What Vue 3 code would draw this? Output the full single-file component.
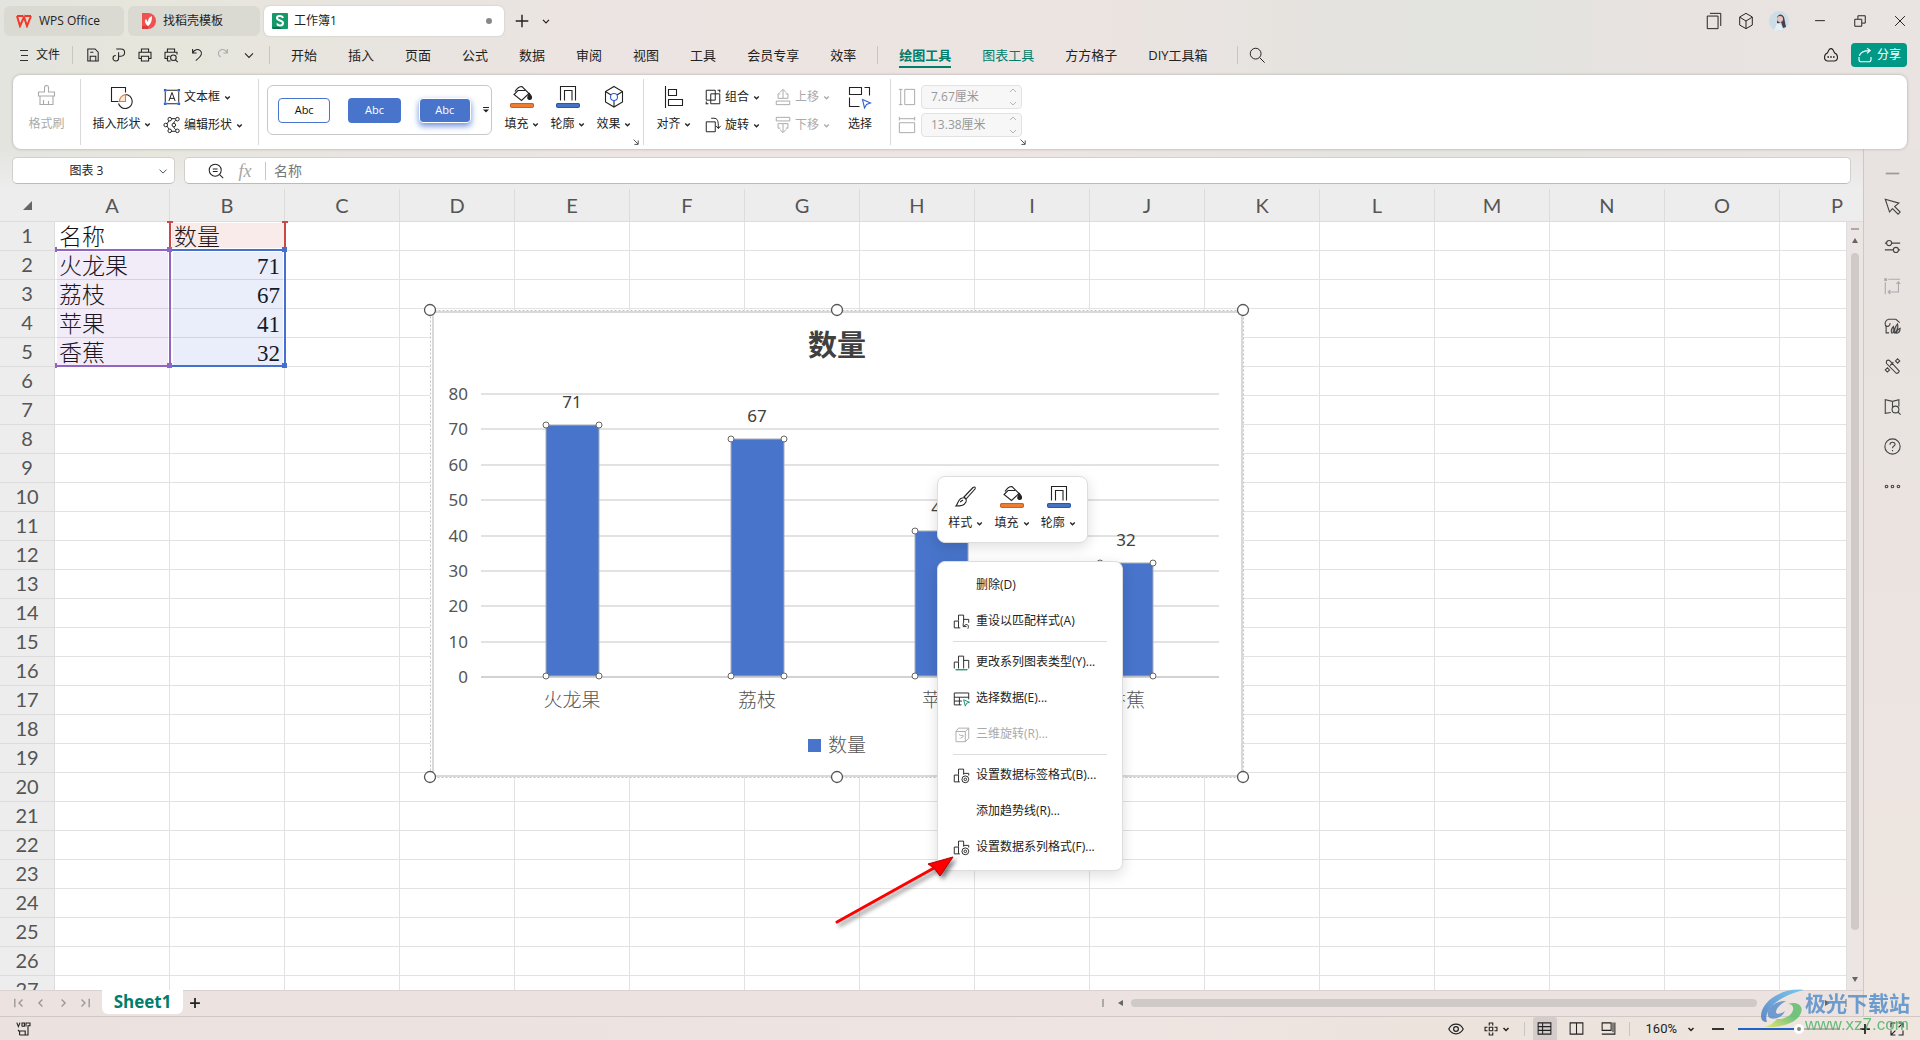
<script setup>
import { h, ref } from 'vue'

const icons = {
  save: '<path d="M3.5 2.5h9l4 4v11h-13zM6.5 17.5v-6h7v6M6.5 6.500h4"/>',
  output: '<path d="M6.500 2.500h6a4.500 4.500 0 0 1 0 9H9.500M9.500 6.500v7.500a3.500 3.500 0 1 1-3.500-3.500"/>',
  print: '<path d="M5.500 6.500v-4h9v4M5.500 14.500h-3v-8h15v8h-3M5.500 11.500h9v6h-9z"/>',
  preview: '<path d="M5.500 6.500v-4h9v4M6.500 14.500h-4v-8h15v3M5.500 17.500v-6h3M5.500 17.500h4"/><circle cx="13" cy="13.500" r="3.500"/><path d="M15.500 16l3 3"/>',
  undo: '<path d="M4.500 2.500v5h5M4.500 7C7 3 11 2 14 4.500s2.500 6-5.500 12.500"/>',
  redo: '<path d="M15.500 2.500v5h-5M15.500 7C13 3 9 2 6 4.500s-2 5.500 1 8"/>',
  down: '<path d="M5 8l5 5 5-5"/>',
  search: '<circle cx="8.500" cy="8.500" r="6"/><path d="M13 13l5.500 5.500"/>',
  brush: '<path d="M8.500 7V2.500a2 2 0 0 1 4 0V7h6v4h-16V7zM4 11v8.500h13V11M7.500 19v-4M12.500 19v-3" transform="translate(1 0)"/>',
  shapes: '<path d="M8.500 16.500h-7v-14h14v5"/><path d="M15.500 9.500a7 7 0 1 1-7 9"/><path d="M9.500 16.500c0-4 2-6 6-7v7z" stroke="#e07b3a" fill="#fde9da"/>',
  textbox: '<path d="M4 2.500h12M4 17.500h12M2.500 4v12M17.500 4v12M6.500 14.500L10 5l3.500 9.500M7.500 11.500h5"/><path d="M1 1h3v3H1zM16 1h3v3h-3zM1 16h3v3H1zM16 16h3v3h-3z" fill="#2f62d9" stroke="none"/>',
  editshape: '<path d="M8 3.500L3.500 10 8 16.500M16 3.500c-6 3-6 10 0 13M8 3h6M8 17h6"/><g fill="#fff"><circle cx="7.500" cy="3.500" r="2"/><circle cx="16" cy="3.500" r="2"/><circle cx="3" cy="10" r="2"/><circle cx="12" cy="10" r="2"/><circle cx="7.500" cy="16.500" r="2"/><circle cx="16" cy="16.500" r="2"/></g>',
  fill: '<path d="M5 6.500C6.500 4 8.500 1.500 12 1.500l7 7-7.500 7L4 9.500l4-4h7"/><path d="M19.500 8.500c3 3.500 2.500 6 0 6s-2-3 0-6z" fill="currentColor"/><rect x="0.500" y="18.500" width="23" height="4" rx="1.500" fill="#ed7d31" stroke="#c4622a"/>',
  outline: '<path d="M4.500 15.500v-14h15v14M8.500 15.500v-10h7.500v10"/><rect x="0.500" y="18.500" width="23" height="4" rx="1.500" fill="#4472c4" stroke="#30569e"/>',
  effect: '<path d="M12 1.500l8.500 5v10.500l-8.500 5-8.500-5V6.500zM3.500 6.500l5.500 3.500M20.500 6.500l-5.500 3.500M12 15.500v6"/><circle cx="12" cy="12" r="3.500" stroke="#2f62d9"/>',
  align: '<path d="M3.500 1v22M6.500 4.500h8v6h-8zM6.500 14.500h14v6h-14z"/>',
  group: '<path d="M2.500 2.500h10v11h-10zM7.500 6.500h10v11h-10zM15 2.500h3M17.500 2v3M2.500 15v3M2 17.500h3"/>',
  rotate: '<path d="M2.500 6.500h10v11h-10zM8 2.500h3c4 0 5 2.500 5 11M13.500 11l2.500 3L18.500 11"/>',
  moveup: '<path d="M2.500 14.500h15v4h-15zM10 11V2M6.500 5L10 1.500 13.500 5M7 6.500H4.500v5h11v-5H13"/>',
  movedown: '<path d="M2.500 1.500h15v4h-15zM10 9v9M6.500 15l3.500 3.500 3.500-3.500M7 13.500H4.500v-5h11v5H13"/>',
  select: '<path d="M1.500 9.500v-7h12v7zM16.500 2.500h5v8M1.500 12.500v9h10"/><path d="M14.500 14.500l8 3.500-4 1.500-2 3.500z" stroke="#2f62d9"/>',
  height: '<path d="M1 1.500h4M1 18.500h4M3 1.500v17M7.500 1.500h11v17h-11z"/>',
  width: '<path d="M1.500 1v4M18.500 1v4M1.500 3h17M1.500 7.500h17v11h-17z"/>',
  more: '<path d="M4 5h12" stroke-width="2"/><path d="M4 9h12l-6 6z" fill="currentColor" stroke="none"/>',
  launch: '<path d="M4 4l11 11M15.500 6v10H6" stroke-width="2.500"/>',
  lens: '<circle cx="9" cy="9" r="7.500"/><path d="M14.500 14.500l4.500 4.500M6 7.500h6M6 10.500h6"/>',
  window: '<path d="M2.500 4.500h12v14h-12zM5.500 1.500h12v14"/>',
  cube: '<path d="M10 1.500l7 4v9l-7 4-7-4v-9zM3.500 6L10 10l6.500-4M10 10v8"/>',
  min: '<path d="M3 9.500h14"/>',
  restore: '<path d="M2.500 7.500h10v10h-10zM7 7V2.500h10.500v10.500H13"/>',
  close: '<path d="M3 3l14 14M17 3L3 17"/>',
  cloud: '<path d="M5.500 7.500l2-4q2.500-3 5 0l2 4c4 1 5.500 9 0 10h-9c-5.500-1-4-9 0-10z"/><path d="M5.500 12.500h2M9 12.500h2M12.500 12.500h2" stroke-width="2"/>',
  share: '<path d="M2.500 12.500v3q0 3 3 3h9q3 0 3-3v-3M3 11c1-5 5-6.500 13-6.500M12.500 1.500l4 3-4 3.500"/>',
  dash: '<path d="M2 10h16" stroke="#999" stroke-width="2"/>',
  pointer: '<path d="M1.500 1.500l16 4.500-5 4 6.500 6.500-2.500 2.500L10 12.500 6.500 16.500z"/>',
  sliders: '<path d="M9 6h10M1 6h2M1 14h10M17 14h2"/><circle cx="6" cy="6" r="3"/><circle cx="14" cy="14" r="3"/>',
  resize: '<path d="M5 1.500h14M1.500 5v14M17 5v11.500H5M14.500 7L17 4.500 19 7M7.500 14L5 16.500 7.500 19"/><path d="M1 1h2v2H1z" fill="currentColor"/>',
  paint: '<path d="M6 17.500H2.500v-7C0 6 2 2 5.500 1.500H14l4.500 4M2.500 9c1.500 2 5 0 4.500-3"/><path d="M9 18c-1-3 0-6 2-8 1 3 1 6-1 8M12 18c0-5 1-8 4-11 1 5-1 9-4 11M14 18c1-3 2-5 5-6 0 4-2 6-5 6z" fill="#bbb"/>',
  wand: '<path d="M3 3.500q2-2 4 0L18 15.500q-1 3-3.500 2.500L3 6.500q-.5-1.500 0-3zM7 9l4-4"/><path d="M16 1l2.500 2.500L16 6l-2.500-2.500zM4 11.500l2.500 2.500L4 16.500 1.500 14z"/>',
  book: '<path d="M10 4v7M8 17l-6.500 1V2L10 4l7.500-2v8"/><circle cx="13.500" cy="13.500" r="4"/><path d="M16.500 16.500l3 3"/>',
  help: '<circle cx="10" cy="10" r="9"/><path d="M7 8c0-4 6-4 6-.5 0 2-3 2-3 4.500M10 14v1.500"/>',
  dots: '<circle cx="3" cy="10" r="1.500"/><circle cx="10" cy="10" r="1.500"/><circle cx="17" cy="10" r="1.500"/>',
  style: '<path d="M10 12l9-9.500q3-1.500 2 1.500L12 14zM8 13c3-1 5 1 4 4-2 4-6 4-10 4 2-2 2-7 6-8zM6 17l3-2"/>',
  mReset: '<path d="M1.500 9.500h5v8h-5zM6.500 9V2.500h6V12M12.500 7.500h6v4M8.500 17.500h-2M12 12v4h4M12.500 15.500c4-4 7-1 5 3"/>',
  mType: '<path d="M1.500 17V9.500h5V17M6.500 9V2.500h6V17M12.500 7.500h6V17"/><path d="M3 18.500h14" stroke="#0c8f70" stroke-width="1.500"/>',
  mData: '<path d="M10 17.500H1.500v-14h17V11M1.500 8.500h17M7.500 8.500v9M1.500 13h9"/><path d="M12.500 11.500l7 3-3.500 1-1.500 3.500z" stroke="#0c8f70"/>',
  mCube: '<path d="M3.500 6.500h11v12h-11zM3.500 6.500l3-4h12v12l-4 4M14.500 6.500l4-4M7 10c3 3 5-1 5 2 0 2-3 1-4 3"/>',
  mFormat: '<path d="M8 17.500H1.500v-8h5v8M6.500 9V2.500h6V9M12.500 7.500h6V10"/><circle cx="14.500" cy="14.500" r="4"/><circle cx="14.500" cy="14.500" r="1.500"/>',
  first: '<path d="M4 4v12M15 5l-5 5 5 5" stroke-width="2"/>',
  prev: '<path d="M12 5l-5 5 5 5" stroke-width="2"/>',
  next: '<path d="M8 5l5 5-5 5" stroke-width="2"/>',
  last: '<path d="M16 4v12M5 5l5 5-5 5" stroke-width="2"/>',
  plus: '<path d="M10 3v14M3 10h14"/>',
  eye: '<path d="M1 10c4-8 14-8 18 0-4 8-14 8-18 0z"/><circle cx="10" cy="10" r="3"/>',
  cross: '<path d="M7.500 7.500h5v5h-5zM7.500 5V1.500h5V5M7.500 15v3.500h5V15M5 7.500H1.500v5H5M15 7.500h3.500v5H15"/>',
  grid: '<path d="M1.500 2.500h17v15h-17zM1.500 7.500h17M7.500 2.500v15M1.500 12.500h17"/>',
  split: '<path d="M1.500 2.500h17v15h-17zM10 2.500v15"/>',
  page: '<path d="M1.500 2.500h12v10h-12zM18.500 2v15.500H1M16 15V2"/>',
  full: '<path d="M12 2.500h5.500V8M17 3l-5 5M8 17.500H2.500V12M3 17l5-5M2.500 8V2.500H8M12 17.500h5.500V12"/>',
  vba: '<path d="M1 2l2 5 2-5M7.500 2v5M7.500 2.500h3v4h-3M12.500 7V2.500h5V6H15v11.500h-3M4.500 17.500v-4l-2-2.500M4.500 12.500h7v5h-7"/>'
}

const Icon = (props) => h('svg', {
  width: props.size || 18, height: props.size || 18,
  viewBox: props.box ? '0 0 24 24' : '0 0 20 20',
  fill: 'none', stroke: 'currentColor', 'stroke-width': props.line || 1.1,
  'aria-hidden': 'true', innerHTML: icons[props.name]
})
Icon.props = ['name', 'size', 'box', 'line']

const quick = [['save', '保存'], ['output', '输出'], ['print', '打印'], ['preview', '打印预览'], ['undo', '撤销'], ['redo', '恢复'], ['down', '更多']]
const menus = ['开始', '插入', '页面', '公式', '数据', '审阅', '视图', '工具', '会员专享', '效率']
const toolMenus = ['绘图工具', '图表工具', '方方格子', 'DIY工具箱']
const columns = 'ABCDEFGHIJKLMNOP'.split('')
const cells = [['名称', '数量'], ['火龙果', 71], ['荔枝', 67], ['苹果', 41], ['香蕉', 32]]
const side = ['dash', 'pointer', 'sliders', 'resize', 'paint', 'wand', 'book', 'help', 'dots']
const contextGroups = [
  [{ t: '删除(D)' }, { t: '重设以匹配样式(A)', i: 'mReset' }],
  [{ t: '更改系列图表类型(Y)...', i: 'mType' }, { t: '选择数据(E)...', i: 'mData' }, { t: '三维旋转(R)...', i: 'mCube', off: true }],
  [{ t: '设置数据标签格式(B)...', i: 'mFormat' }, { t: '添加趋势线(R)...' }, { t: '设置数据系列格式(F)...', i: 'mFormat' }]
]

const base = 376
const yOf = (v) => Math.round(base - v * 283 / 80)
const bars = cells.slice(1).map(([name, value], i) => ({ name, value, x: Math.round(152 + i * 184.5), y: yOf(value) }))
const ticks = [80, 70, 60, 50, 40, 30, 20, 10, 0]
const handles = [[10, 10], [417, 10], [823, 10], [10, 477], [417, 477], [823, 477]]

const nameBox = ref('图表 3')
const formula = ref('名称')
const zoom = ref(61)
</script>

<template>
  <div class="app">
    <header class="title-bar">
      <button class="doc-tab home">
        <svg width="16" height="14" viewBox="0 0 16 14"><path d="M1 2l3 10 4-9 3 9L15 2M1 2h6M9 2h6" fill="none" stroke="#f0392b" stroke-width="2" /></svg>
        WPS Office
      </button>
      <button class="doc-tab docer">
        <svg width="14" height="16" viewBox="0 0 14 16"><path d="M0 0h6a8 8 0 0 1 0 16H0z" fill="#f0504e" /><path d="M0 13h6v3H0z" fill="#d93a3a" /><path d="M6 13C2 10 3 7 4 6l2 3c0-3 1-5 4-6 0 5-1 8-4 10z" fill="#fff" /></svg>
        找稻壳模板
      </button>
      <button class="doc-tab current">
        <svg width="16" height="16" viewBox="0 0 16 16"><rect width="16" height="16" rx="1" fill="#149a6a" /><path d="M0 14h8l2 2H1z" fill="#0b7048" /><path d="M11 5C10 2 5 2.500 5 5c0 3 6 2 6 5s-5 3.500-6 .5" fill="none" stroke="#fff" stroke-width="2" /></svg>
        工作簿1
        <i class="unsaved"></i>
      </button>
      <button class="plain new-tab" aria-label="新建"><Icon name="plus" :line="1.6" /></button>
      <button class="plain" aria-label="标签列表"><Icon name="down" size="12" :line="2" /></button>
      <div class="window-tools">
        <button class="plain" aria-label="窗口"><Icon name="window" /></button>
        <button class="plain" aria-label="应用"><Icon name="cube" /></button>
        <button class="plain account" aria-label="账户">
          <svg width="20" height="20" viewBox="0 0 20 20"><circle cx="10" cy="10" r="10" fill="#cddde6" /><path d="M8 6q4-5 7 0l2 10-3 1-2-6-4 2z" fill="#4a3d50" /><circle cx="11" cy="8" r="3" fill="#e9c4bd" /><path d="M5 20l3-8 4 2 2 5z" fill="#e6f0f4" /></svg>
        </button>
        <button class="plain sys" aria-label="最小化"><Icon name="min" size="14" :line="1.4" /></button>
        <button class="plain sys" aria-label="还原"><Icon name="restore" size="14" :line="1.4" /></button>
        <button class="plain sys" aria-label="关闭"><Icon name="close" size="14" :line="1.4" /></button>
      </div>
    </header>

    <nav class="menu-bar">
      <button class="plain file"><svg width="10" height="12" viewBox="0 0 10 12"><path d="M1 1.500h8M2 6.500h7M1 11.500h8" stroke="#333" /></svg>文件</button>
      <i class="rule"></i>
      <div class="quick">
        <button v-for="[n, label] in quick" :key="n" class="plain" :class="{ dim: n === 'redo' }" :aria-label="label"><Icon :name="n" size="16" :line="1.3" /></button>
      </div>
      <i class="rule"></i>
      <div class="menus">
        <button v-for="m in menus" :key="m" class="plain">{{ m }}</button>
      </div>
      <i class="rule"></i>
      <div class="menus tools">
        <button v-for="(m, i) in toolMenus" :key="m" class="plain" :class="{ green: i < 2, active: i === 0 }">{{ m }}</button>
      </div>
      <i class="rule"></i>
      <button class="plain find" aria-label="搜索"><Icon name="search" /></button>
      <button class="plain cloud" aria-label="云同步"><Icon name="cloud" size="16" :line="1.4" /></button>
      <button class="share"><Icon name="share" size="16" :line="1.4" />分享</button>
    </nav>

    <section class="ribbon">
      <button class="big w67 dim" disabled><Icon name="brush" size="24" box="1" /><span>格式刷</span></button>
      <i class="divider"></i>
      <button class="big w82"><Icon name="shapes" size="24" box="1" /><span>插入形状<Icon name="down" size="9" :line="3" /></span></button>
      <div class="pair w95">
        <button class="row"><Icon name="textbox" /><span>文本框</span><Icon name="down" size="9" :line="3" /></button>
        <button class="row"><Icon name="editshape" /><span>编辑形状</span><Icon name="down" size="9" :line="3" /></button>
      </div>
      <i class="divider"></i>
      <div class="gallery">
        <button class="swatch hollow">Abc</button>
        <button class="swatch">Abc</button>
        <button class="swatch raised">Abc</button>
        <button class="plain expand" aria-label="更多样式"><Icon name="more" size="10" /></button>
      </div>
      <div class="cluster">
        <button class="big w46"><Icon name="fill" size="24" box="1" /><span>填充<Icon name="down" size="9" :line="3" /></span></button>
        <button class="big w46"><Icon name="outline" size="24" box="1" /><span>轮廓<Icon name="down" size="9" :line="3" /></span></button>
        <button class="big w46"><Icon name="effect" size="24" box="1" /><span>效果<Icon name="down" size="9" :line="3" /></span></button>
        <button class="plain launcher" aria-label="形状选项"><Icon name="launch" size="8" /></button>
      </div>
      <i class="divider"></i>
      <button class="big w60"><Icon name="align" size="24" box="1" /><span>对齐<Icon name="down" size="9" :line="3" /></span></button>
      <div class="pair w70">
        <button class="row"><Icon name="group" /><span>组合</span><Icon name="down" size="9" :line="3" /></button>
        <button class="row"><Icon name="rotate" /><span>旋转</span><Icon name="down" size="9" :line="3" /></button>
      </div>
      <div class="pair w60">
        <button class="row dim" disabled><Icon name="moveup" /><span>上移</span><Icon name="down" size="9" :line="3" /></button>
        <button class="row dim" disabled><Icon name="movedown" /><span>下移</span><Icon name="down" size="9" :line="3" /></button>
      </div>
      <button class="big w56"><Icon name="select" size="24" box="1" /><span>选择</span></button>
      <i class="divider"></i>
      <div class="sizes">
        <label class="dim"><Icon name="height" /><span class="spin"><input value="7.67厘米" disabled aria-label="高度"><svg width="8" height="18" viewBox="0 0 8 18"><path d="M1 4l3-3 3 3M1 14l3 3 3-3" fill="none" stroke="#b5b5b5" /></svg></span></label>
        <label class="dim"><Icon name="width" /><span class="spin"><input value="13.38厘米" disabled aria-label="宽度"><svg width="8" height="18" viewBox="0 0 8 18"><path d="M1 4l3-3 3 3M1 14l3 3 3-3" fill="none" stroke="#b5b5b5" /></svg></span></label>
        <button class="plain launcher" aria-label="大小选项"><Icon name="launch" size="8" /></button>
      </div>
    </section>

    <div class="body">
      <main class="main">
        <div class="formula-bar">
          <div class="name-box">
            <input v-model="nameBox" aria-label="名称框">
            <button class="plain" aria-label="名称列表"><Icon name="down" size="14" /></button>
          </div>
          <div class="formula">
            <button class="plain" aria-label="缩放"><Icon name="lens" size="16" :line="1.3" /></button>
            <button class="plain fx">fx</button>
            <i class="rule"></i>
            <input v-model="formula" aria-label="编辑栏">
          </div>
        </div>

        <div class="sheet">
          <table>
            <thead>
              <tr>
                <th class="corner"><svg width="9" height="9" viewBox="0 0 9 9"><path d="M9 0v9H0z" fill="#666" /></svg></th>
                <th v-for="c in columns" :key="c">{{ c }}</th>
              </tr>
            </thead>
            <tbody>
              <tr v-for="r in 27" :key="r">
                <th>{{ r }}</th>
                <td v-for="(c, i) in columns" :key="c" :class="{ num: r > 1 && i === 1 }">{{ cells[r - 1]?.[i] }}</td>
              </tr>
            </tbody>
          </table>

          <svg class="ranges" width="240" height="152" viewBox="0 0 240 152" aria-hidden="true">
            <rect x="117" y="2" width="112" height="25" fill="#c43c32" fill-opacity=".1" />
            <rect x="2" y="31" width="111" height="113" fill="#7a45b8" fill-opacity=".1" />
            <rect x="118" y="31" width="110" height="113" fill="#3565d0" fill-opacity=".11" />
            <path d="M115 2v25M230 2v25M112 1h6M227 1h6" stroke="#c9484a" stroke-width="2" fill="none" />
            <path d="M0 29h115v116H0" stroke="#9265c2" stroke-width="2" fill="none" />
            <path d="M116 29h114v116H116" stroke="#466fd0" stroke-width="2" fill="none" />
            <path d="M0 26h2v5H0zM112 26h5v5h-5zM0 142h2v5H0zM112 142h5v5h-5z" fill="#9265c2" />
            <path d="M227 26h5v5h-5zM227 142h5v5h-5z" fill="#466fd0" />
          </svg>

          <svg class="chart" width="834" height="488" viewBox="0 0 834 488" role="img" aria-label="数量">
            <rect x="10" y="10" width="813" height="467" fill="#fff" />
            <rect x="13" y="12" width="809" height="464" fill="none" stroke="#d9d9d9" stroke-width="2" />
            <rect x="10.500" y="10.500" width="813" height="467" fill="none" stroke="#c4c4c4" stroke-dasharray="2 2" />
            <text x="417" y="56" class="chart-title">数量</text>
            <g v-for="t in ticks" :key="t">
              <path :d="`M61 ${yOf(t) + 1}h738`" :stroke="t ? '#e2e2e2' : '#d2d2d2'" stroke-width="2" />
              <text x="48" :y="yOf(t) + 7" class="tick">{{ t }}</text>
            </g>
            <g v-for="b in bars" :key="b.name">
              <rect :x="b.x - 26" :y="b.y" width="53" :height="base - b.y" fill="#4874cb" stroke="#a8adb8" />
              <text :x="b.x" :y="b.y - 17" class="value">{{ b.value }}</text>
              <text :x="b.x" y="407" class="category">{{ b.name }}</text>
              <g fill="#fff" stroke="#666">
                <circle :cx="b.x - 26" :cy="b.y" r="3" /><circle :cx="b.x + 27" :cy="b.y" r="3" />
                <circle :cx="b.x - 26" :cy="base" r="3" /><circle :cx="b.x + 27" :cy="base" r="3" />
              </g>
            </g>
            <rect x="388" y="439" width="13" height="13" fill="#4874cb" />
            <text x="408" y="452" class="legend">数量</text>
            <circle v-for="[x, y] in handles" :key="x + '-' + y" :cx="x" :cy="y" r="5.500" fill="#fff" stroke="#555" stroke-width="1.300" />
          </svg>

          <div class="mini-bar">
            <button><Icon name="style" size="24" box="1" /><span>样式<Icon name="down" size="9" :line="3" /></span></button>
            <button><Icon name="fill" size="24" box="1" /><span>填充<Icon name="down" size="9" :line="3" /></span></button>
            <button><Icon name="outline" size="24" box="1" /><span>轮廓<Icon name="down" size="9" :line="3" /></span></button>
          </div>

          <div class="context" role="menu">
            <template v-for="(g, gi) in contextGroups" :key="gi">
              <hr v-if="gi">
              <button v-for="m in g" :key="m.t" role="menuitem" :disabled="m.off">
                <span class="slot"><Icon v-if="m.i" :name="m.i" size="17" /></span>{{ m.t }}
              </button>
            </template>
          </div>

          <svg class="arrow" width="130" height="80" viewBox="0 0 130 80" aria-hidden="true">
            <path d="M7 72L104 18" stroke="#fe0000" stroke-width="3" stroke-linecap="round" />
            <path d="M123 7L98 14l6 4 6 8z" fill="#fe0000" stroke="#b00000" />
          </svg>

          <div class="v-scroll">
            <svg width="8" height="20" viewBox="0 0 8 20"><path d="M0 2h8" stroke="#aaa" stroke-width="2" /><path d="M1 16l3-5 3 5z" fill="#666" /></svg>
            <i></i>
            <svg class="v-end" width="8" height="6" viewBox="0 0 8 6"><path d="M1 1h6L4 6z" fill="#666" /></svg>
          </div>
        </div>

        <div class="sheet-bar">
          <div class="sheet-nav">
            <button v-for="n in ['first', 'prev', 'next', 'last']" :key="n" class="plain" :aria-label="n"><Icon :name="n" size="14" /></button>
          </div>
          <button class="sheet-tab">Sheet1</button>
          <button class="plain add" aria-label="新建工作表"><Icon name="plus" size="14" :line="2.5" /></button>
          <div class="h-scroll">
            <i class="grip"></i>
            <svg width="6" height="8" viewBox="0 0 6 8"><path d="M5 1v6L0 4z" fill="#666" /></svg>
            <i class="thumb"></i>
            <svg width="6" height="8" viewBox="0 0 6 8"><path d="M0 1v6l5-3z" fill="#666" /></svg>
            <i class="grip"></i>
          </div>
        </div>
      </main>

      <aside class="side">
        <button v-for="s in side" :key="s" class="plain" :class="{ dim: s === 'resize' }" :aria-label="s"><Icon :name="s" size="17" :line="1.3" /></button>
      </aside>
    </div>

    <footer class="status">
      <button class="plain vba" aria-label="宏"><Icon name="vba" size="16" :line="1.4" /></button>
      <div class="status-right">
        <button class="plain eye" aria-label="护眼模式"><Icon name="eye" size="16" :line="1.5" /></button>
        <button class="plain cross" aria-label="阅读模式"><Icon name="cross" size="14" :line="1.6" /><Icon name="down" size="10" :line="3" /></button>
        <i class="rule"></i>
        <button class="plain view on" aria-label="普通视图"><Icon name="grid" size="15" :line="1.4" /></button>
        <button class="plain view" aria-label="分页预览"><Icon name="split" size="15" :line="1.4" /></button>
        <button class="plain view" aria-label="页面布局"><Icon name="page" size="15" :line="1.4" /></button>
        <i class="rule"></i>
        <button class="plain percent">160%<Icon name="down" size="10" :line="3" /></button>
        <button class="plain minus" aria-label="缩小"><svg width="12" height="2"><path d="M0 1h12" stroke="#333" stroke-width="2" /></svg></button>
        <input v-model="zoom" type="range" min="0" max="100" aria-label="显示比例">
        <button class="plain plus" aria-label="放大"><Icon name="plus" size="14" :line="2.5" /></button>
        <button class="plain full" aria-label="全屏"><Icon name="full" size="16" :line="1.4" /></button>
      </div>
    </footer>

    <div class="watermark">
      <svg width="44" height="42" viewBox="0 0 44 42" aria-hidden="true">
        <defs>
          <linearGradient id="wa" x1="0" y1="1" x2="1" y2="0"><stop offset="0" stop-color="#4a78c4" /><stop offset="1" stop-color="#68c4ee" /></linearGradient>
          <linearGradient id="wb" x1="0" y1="1" x2="1" y2="0"><stop offset="0" stop-color="#e4e45a" /><stop offset=".6" stop-color="#5fbd6e" /></linearGradient>
        </defs>
        <path d="M43 1C22-2 0 12 0 27q0 6 6 6c-4-10 8-25 37-32z" fill="url(#wa)" />
        <path d="M25 12C13 12 5 20 7 27c2 5 14 3 17-5-4 3-9 4-9 1s4-8 10-11z" fill="#5a8fcc" />
        <path d="M27 15c6 0 7 6 2 11-5 4-9 4-13 4-3 3-4 5-12 8 16 1 32-4 36-14 3-8-5-12-13-9z" fill="url(#wb)" />
      </svg>
      <div class="mark-text"><b>极光下载站</b><span>www.xz7.com</span></div>
    </div>
  </div>
</template>

<style>
body { margin: 0; overflow: hidden; }
</style>

<style scoped>
* { box-sizing: border-box; }
.app {
  position: relative;
  display: flex;
  flex-direction: column;
  height: 100vh;
  overflow: hidden;
  font: 12px/16px "Open Sans", "Noto Sans CJK SC", sans-serif;
  color: #222;
  background: linear-gradient(90deg, #e4e4df 0, #e6e6dc 8%, #e8e4df 18%, #ece4e2 32%, #ece4e1 55%, #e4e3df 72%, #e3e3df 79%, #e8e3e1 86%, #e9e4e1 100%);
}
button, input { font: inherit; color: inherit; border: 0; padding: 0; background: none; outline: 0; }
button { white-space: nowrap; }
svg { flex: none; display: block; }
.plain { display: flex; align-items: center; justify-content: center; }
.dim { color: #aaa; }
.rule { width: 1px; height: 18px; background: #c9c5c2; flex: none; }

.title-bar { display: flex; align-items: center; gap: 4px; height: 41px; padding: 0 7px 0 4px; }
.doc-tab { display: flex; align-items: center; gap: 6px; height: 30px; padding: 0 12px; border-radius: 6px; background: #dad9d2; }
.home { width: 120px; gap: 7px; }
.docer { width: 132px; padding-left: 14px; gap: 7px; }
.current { width: 240px; padding: 0 12px 0 8px; background: #fff; box-shadow: 0 0 2px #bbb; }
.unsaved { width: 6px; height: 6px; margin-left: auto; border-radius: 50%; background: #888; }
.new-tab { width: 28px; }
.window-tools { display: flex; align-items: center; gap: 14px; margin-left: auto; }
.window-tools .sys { width: 26px; }
.account { margin-right: 4px; }

.menu-bar { display: flex; align-items: center; height: 28px; margin-bottom: 6px; padding: 0 13px 0 19px; font-size: 13px; }
.file { gap: 7px; width: 41px; margin-right: 12px; font-size: 12px; }
.quick { display: flex; gap: 10px; padding: 0 12px; }
.menus { display: flex; gap: 31px; padding: 0 21px; }
.menus .plain { height: 26px; }
.tools { padding-right: 29px; }
.green { color: #007d6b; }
.active { font-weight: 700; box-shadow: inset 0 -2px #007d6b; }
.find { margin-left: 10px; }
.cloud { margin-left: auto; }
.share { display: flex; align-items: center; justify-content: center; gap: 4px; width: 56px; height: 24px; margin-left: 12px; border-radius: 4px; background: #009985; color: #fff; font-size: 12px; }

.ribbon { display: flex; flex: none; height: 74px; margin: 0 13px; border-radius: 8px; background: #fff; box-shadow: 0 0 3px #aaa5a2; position: relative; z-index: 1; }
.divider { width: 1px; height: 66px; margin-top: 4px; background: #d9d9d9; flex: none; }
.big { display: flex; flex-direction: column; align-items: center; gap: 7px; height: 70px; padding-top: 10px; }
.big span { display: flex; align-items: center; gap: 2px; }
.w46 { width: 46px; }
.w56 { width: 56px; padding-right: 4px; }
.w60 { width: 60px; }
.w67 { width: 67px; }
.w70 { width: 70px; }
.w82 { width: 82px; }
.w95 { width: 95px; }
.pair { padding-top: 8px; }
.row { display: flex; align-items: center; gap: 3px; height: 28px; }
.big.dim, .row.dim { color: #aaa; }
.gallery { display: flex; align-items: center; gap: 18px; width: 225px; height: 50px; margin: 10px 7px 0 8px; padding-left: 10px; border: 1px solid #c8c8c8; border-radius: 6px; }
.swatch { width: 53px; height: 25px; border-radius: 4px; background: #4874cb; color: #fff; font-size: 11px; }
.hollow { border: 1px solid #4874cb; background: #fff; color: #111; }
.raised { border: 1px solid #fff; box-shadow: 0 3px 6px #6d8fd8; }
.expand { margin-left: -8px; }
.cluster { position: relative; display: flex; width: 144px; }
.launcher { position: absolute; right: 3px; bottom: 3px; color: #555; }
.sizes { position: relative; padding: 10px 0 0 7px; width: 136px; }
.sizes label { display: flex; align-items: center; gap: 5px; margin-bottom: 4px; }
.sizes .launcher { right: 0; }
.spin { display: flex; align-items: center; width: 101px; height: 24px; padding: 0 4px 0 9px; border: 1px solid #e2e2e2; border-radius: 4px; background: #f7f7f7; }
.spin input { flex: 1; min-width: 0; color: #999; }

.body { display: flex; flex: 1; min-height: 0; border-bottom: 1px solid #cfc8c5; }
.main { display: flex; flex-direction: column; flex: 1; min-width: 0; }
.formula-bar { display: flex; gap: 9px; height: 40px; flex: none; padding: 8px 12px 6px; background: linear-gradient(transparent, #ededed); }
.name-box, .formula { display: flex; align-items: center; height: 27px; border: 1px solid #d3cfcc; border-bottom-color: #bbb; border-radius: 5px; background: #fff; }
.name-box { width: 163px; padding: 0 4px; }
.name-box input { flex: 1; min-width: 0; text-align: center; }
.formula { flex: 1; padding-left: 23px; font-size: 14px; }
.formula input { flex: 1; margin-left: 8px; color: #777; }
.fx { width: 32px; margin: 0 4px 0 5px; font: italic 18px/20px "Liberation Serif", serif; color: #a5a5a5; }

.sheet { position: relative; flex: 1; min-height: 0; overflow: hidden; background: #fff; }
table { table-layout: fixed; width: 1895px; border-collapse: separate; border-spacing: 0; }
th { height: 29px; padding: 0 0 3px; border: solid #dcdcdc; border-width: 0 1px 1px 0; background: #ededed; font: 20px/20px Lato, sans-serif; color: #555; }
thead th { height: 33px; width: 115px; padding: 0; }
thead th.corner { width: 55px; border-right-color: #ededed; padding-left: 23px; }
td { height: 29px; padding: 4px 4px 0; border: solid #e2e2e2; border-width: 0 1px 1px 0; font: 300 23px/24px "Liberation Serif", "Noto Sans CJK SC", serif; color: #111; white-space: nowrap; }
.num { text-align: right; }
.ranges { position: absolute; left: 55px; top: 32px; }
.chart { position: absolute; left: 420px; top: 111px; }
.chart text { font-family: "Noto Sans", "Noto Sans CJK SC", sans-serif; font-size: 17px; fill: #555; }
.chart .chart-title { font-size: 29px; font-weight: 700; fill: #404040; text-anchor: middle; }
.chart .tick { text-anchor: end; }
.chart .value { fill: #404040; text-anchor: middle; }
.chart .category { font-size: 19px; font-weight: 300; text-anchor: middle; }
.chart .legend { font-size: 19px; font-weight: 300; }

.mini-bar { position: absolute; left: 937px; top: 287px; display: flex; width: 151px; height: 67px; padding: 8px 5px; border: 1px solid #ddd; border-radius: 8px; background: #fff; box-shadow: 0 4px 14px #0002; }
.mini-bar button { flex: 1; display: flex; flex-direction: column; align-items: center; gap: 6px; }
.mini-bar span { display: flex; align-items: center; gap: 3px; }
.context { position: absolute; left: 937px; top: 372px; width: 186px; padding: 5px 0; border: 1px solid #ddd; border-radius: 8px; background: #fff; box-shadow: 0 4px 14px #0002; }
.context button { display: flex; align-items: center; width: 100%; height: 36px; padding-left: 15px; }
.context button:disabled { color: #aaa; }
.context hr { height: 1px; margin: 2px 15px; border: 0; background: #ddd; }
.slot { width: 23px; }
.arrow { position: absolute; left: 830px; top: 661px; fill: none; filter: drop-shadow(3px 3px 2px #0007); }
.v-scroll { position: absolute; top: 33px; right: 0; bottom: 0; display: flex; flex-direction: column; align-items: center; width: 17px; padding: 5px 0 8px; background: #ece5e3; border-left: 1px solid #ddd; }
.v-scroll i { flex: 1; width: 8px; margin: 6px 0 46px; border-radius: 4px; background: #cfcac8; }

.sheet-bar { display: flex; flex: none; align-items: center; height: 26px; background: #ece3e0; box-shadow: inset 0 1px #d8d3d1; }
.sheet-nav { display: flex; gap: 8px; width: 102px; padding-left: 12px; color: #999; }
.sheet-tab { align-self: flex-start; width: 81px; height: 24px; border-radius: 0 0 6px 6px; background: #fff; color: #007d6b; font: 700 17px/24px "Open Sans", sans-serif; }
.add { margin-left: 5px; }
.h-scroll { display: flex; align-items: center; width: 40%; margin: 0 16px 0 auto; gap: 14px; }
.grip { width: 2px; height: 8px; background: #aaa; }
.thumb { flex: 1; height: 8px; margin: 0 54px 0 -7px; border-radius: 4px; background: #cfcac8; }

.side { display: flex; flex-direction: column; align-items: center; width: 57px; border-left: 1px solid #cdc8c6; padding-top: 12px; background: linear-gradient(#e8e3e0, #eae3e0 40%, #efe6e0); }
.side .plain { height: 40px; color: #444; }
.side .plain:first-child { height: 25px; }
.side .dim { color: #aaa; }

.status { display: flex; align-items: center; flex: none; height: 23px; background: linear-gradient(90deg, #ebe2df, #eee4e1 60%, #ece3dc 80%, #efe6e0); }
.vba { margin-left: 16px; }
.status-right { display: flex; align-items: center; margin-left: auto; padding-right: 15px; }
.status-right .rule { height: 14px; }
.cross { gap: 3px; margin: 0 13px 0 20px; }
.view { width: 24px; height: 24px; margin: 0 4px; border-radius: 3px; }
.rule + .view { margin-left: 8px; }
.on { background: #d3ccca; }
.percent { gap: 9px; margin: 0 16px 0 16px; font: 13px/16px Roboto, sans-serif; }
.view + .rule { margin-left: 4px; }
input[type="range"] { appearance: none; width: 102px; height: 10px; margin: 0 18px 0 14px; background: linear-gradient(90deg, #2062c8 62px, #b9b1af 62px) center / 100% 2px no-repeat; }
input[type="range"]::-webkit-slider-thumb { appearance: none; width: 10px; height: 10px; border: 3px solid #fff; border-radius: 50%; background: #888; }
.full { margin-left: 17px; }

.watermark { position: absolute; right: 9px; bottom: 6px; display: flex; align-items: flex-start; width: 150px; pointer-events: none; opacity: .85; }
.mark-text { display: flex; flex-direction: column; white-space: nowrap; }
.mark-text b { font: 700 21px/26px "Noto Sans CJK SC", sans-serif; color: #568fcb; }
.mark-text span { font: 17px/19px "Liberation Sans", sans-serif; color: #4fb36a; }
</style>
